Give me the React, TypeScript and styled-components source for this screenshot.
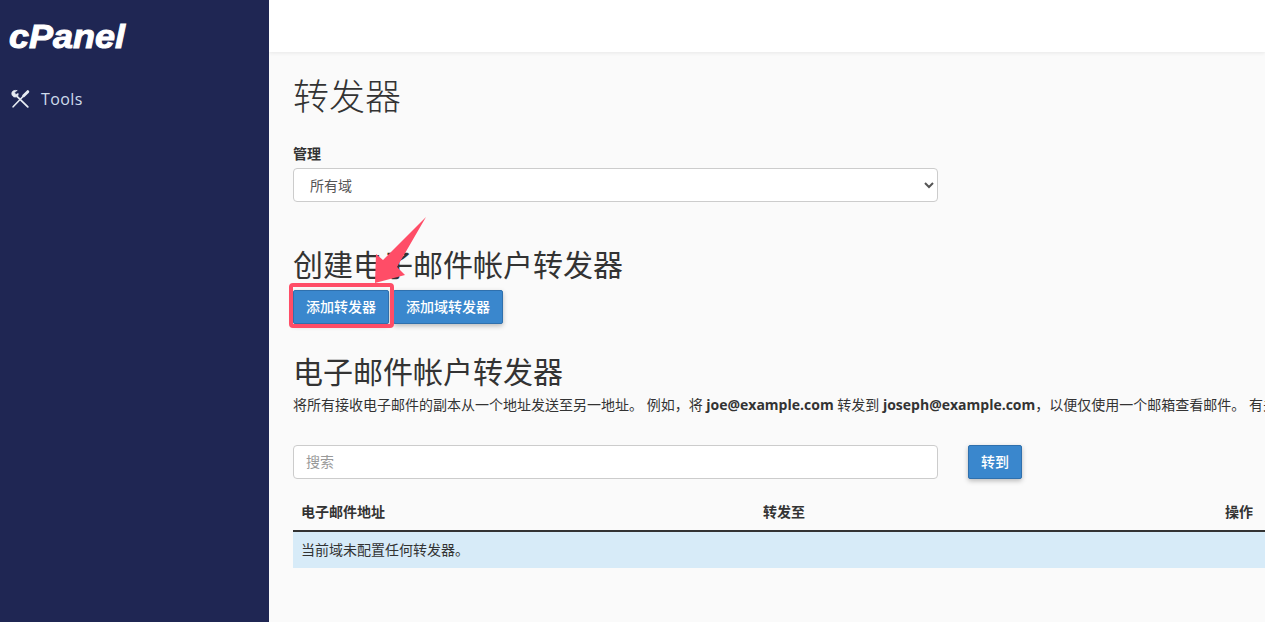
import React from "react";
import styled, { createGlobalStyle } from "styled-components";

const cjk = `"Open Sans", "Noto Sans CJK SC", sans-serif`;

const Global = createGlobalStyle`
  html, body { margin: 0; padding: 0; height: 100%; overflow: hidden; }
  body { background: #fafafa; font-family: ${cjk}; color: #333; }
  * { box-sizing: border-box; }
`;

const Shell = styled.div`
  display: flex;
  width: 1265px;
  height: 622px;
  overflow: hidden;
`;
const Sidebar = styled.aside`
  width: 269px;
  flex: none;
  background: #1f2653;
  padding: 18px 10px 0 9px;
`;
const Logo = styled.div`
  height: 38px;
  font-family: "Liberation Sans", sans-serif;
  font-size: 33px;
  font-weight: 700;
  font-style: italic;
  line-height: 38px;
  color: #fff;
  -webkit-text-stroke: 1px #fff;
  transform: scaleX(1.09);
  transform-origin: left center;
`;
const NavItem = styled.div`
  display: flex;
  align-items: center;
  gap: 10px;
  margin-top: 26px;
  color: #cfdcec;
  font-size: 16px;
  line-height: 34px;
  letter-spacing: 0.4px;
`;
const Main = styled.main`
  position: relative;
  flex: 1;
  min-width: 0;
  overflow: hidden;
`;
const TopBar = styled.header`
  height: 52px;
  background: #fff;
  box-shadow: 0 1px 4px rgba(0, 0, 0, 0.08);
`;
const Content = styled.div`
  width: 1100px;
  padding: 17px 0 0 24px;
`;
const PageTitle = styled.h1`
  margin: 0;
  font-size: 36px;
  font-weight: 200;
  line-height: 56px;
  color: #333;
`;
const FieldLabel = styled.label`
  display: block;
  margin-top: 19px;
  font-size: 14px;
  font-weight: 700;
  line-height: 20px;
  color: #333;
`;
const Select = styled.select`
  display: block;
  width: 645px;
  height: 34px;
  margin-top: 4px;
  padding: 0 12px;
  background: #fff;
  border: 1px solid #ccc;
  border-radius: 4px;
  color: #555;
  font: 400 14px ${cjk};
`;
const SectionTitle = styled.h2<{ $top: number }>`
  margin: ${(p) => p.$top}px 0 0;
  font-size: 30px;
  font-weight: 400;
  line-height: 36px;
  color: #333;
`;
const ButtonRow = styled.div`
  display: flex;
  gap: 4px;
  margin-top: 7px;
`;
const Button = styled.button`
  height: 34px;
  padding: 0 12px 2px;
  background: #3a87cd;
  border: 1px solid #2f70ad;
  border-radius: 2px;
  box-shadow: 0 2px 5px rgba(0, 0, 0, 0.26);
  color: #fff;
  font: 500 14px ${cjk};
  white-space: nowrap;
`;
const Description = styled.p`
  margin: 5px 0 0;
  width: 1100px;
  font-size: 14px;
  line-height: 20px;
  white-space: nowrap;
  color: #333;
  b { font-weight: 700; }
`;
const SearchRow = styled.div`
  display: flex;
  gap: 30px;
  margin-top: 30px;
`;
const SearchInput = styled.input`
  width: 645px;
  height: 34px;
  padding: 0 12px 2px;
  background: #fff;
  border: 1px solid #ccc;
  border-radius: 4px;
  font: 400 14px ${cjk};
  &::placeholder { color: #999; opacity: 1; }
`;
const Table = styled.table`
  width: 972px;
  margin-top: 15px;
  border-collapse: collapse;
  font-size: 14px;
  table-layout: fixed;
  th {
    height: 37px;
    padding: 0 8px 2px;
    text-align: left;
    font-weight: 700;
    border-bottom: 2px solid #333;
  }
  td {
    height: 37px;
    padding: 0 8px 2px;
    background: #d7ebf8;
  }
`;
const Highlight = styled.div`
  position: absolute;
  left: 20px;
  top: 283px;
  width: 105px;
  height: 45px;
  border: 4px solid #ff4d67;
  border-radius: 4px;
`;
const Arrow = styled.svg`
  position: absolute;
  left: 90px;
  top: 215px;
`;

export default function App() {
  return (
    <>
      <Global />
      <Shell>
        <Sidebar>
          <Logo>cPanel</Logo>
          <NavItem>
            <svg width="22" height="22" viewBox="0 0 24 24" fill="none" stroke="#e6ebf2" strokeLinecap="round" strokeLinejoin="round">
              <path d="M4.500 20.500 15.500 9" strokeWidth="1.800" />
              <path d="M16 8.500 20.500 4" strokeWidth="3.200" />
              <path d="M20.500 20.500 9 9.500" strokeWidth="2" />
              <path d="M8.500 2.800 6 5.200l1.500 2L10 6c.5 3-2.500 4.700-5 3.500C2.500 8 2.300 4 5 3c1-.5 2.500-.5 3.500-.2z" fill="#e6ebf2" strokeWidth="0.800" />
            </svg>
            Tools
          </NavItem>
        </Sidebar>
        <Main>
          <TopBar />
          <Content>
            <PageTitle>转发器</PageTitle>
            <FieldLabel>管理</FieldLabel>
            <Select defaultValue="all">
              <option value="all">所有域</option>
            </Select>
            <SectionTitle $top={45}>创建电子邮件帐户转发器</SectionTitle>
            <ButtonRow>
              <Button>添加转发器</Button>
              <Button>添加域转发器</Button>
            </ButtonRow>
            <SectionTitle $top={30}>电子邮件帐户转发器</SectionTitle>
            <Description>
              将所有接收电子邮件的副本从一个地址发送至另一地址。 例如，将 <b>joe@example.com</b> 转发到 <b>joseph@example.com</b>，以便仅使用一个邮箱查看邮件。 有关更多信息，请阅读文档。
            </Description>
            <SearchRow>
              <SearchInput placeholder="搜索" />
              <Button>转到</Button>
            </SearchRow>
            <Table>
              <colgroup>
                <col style={{ width: 462 }} />
                <col style={{ width: 462 }} />
                <col />
              </colgroup>
              <thead>
                <tr>
                  <th>电子邮件地址</th>
                  <th>转发至</th>
                  <th>操作</th>
                </tr>
              </thead>
              <tbody>
                <tr>
                  <td colSpan={3}>当前域未配置任何转发器。</td>
                </tr>
              </tbody>
            </Table>
          </Content>
          <Highlight />
          <Arrow width="80" height="80" viewBox="0 0 80 80">
            <path d="M67 2 38 52 46 60 16 68 17 39 24 45z" fill="#ff4d67" />
          </Arrow>
        </Main>
      </Shell>
    </>
  );
}
